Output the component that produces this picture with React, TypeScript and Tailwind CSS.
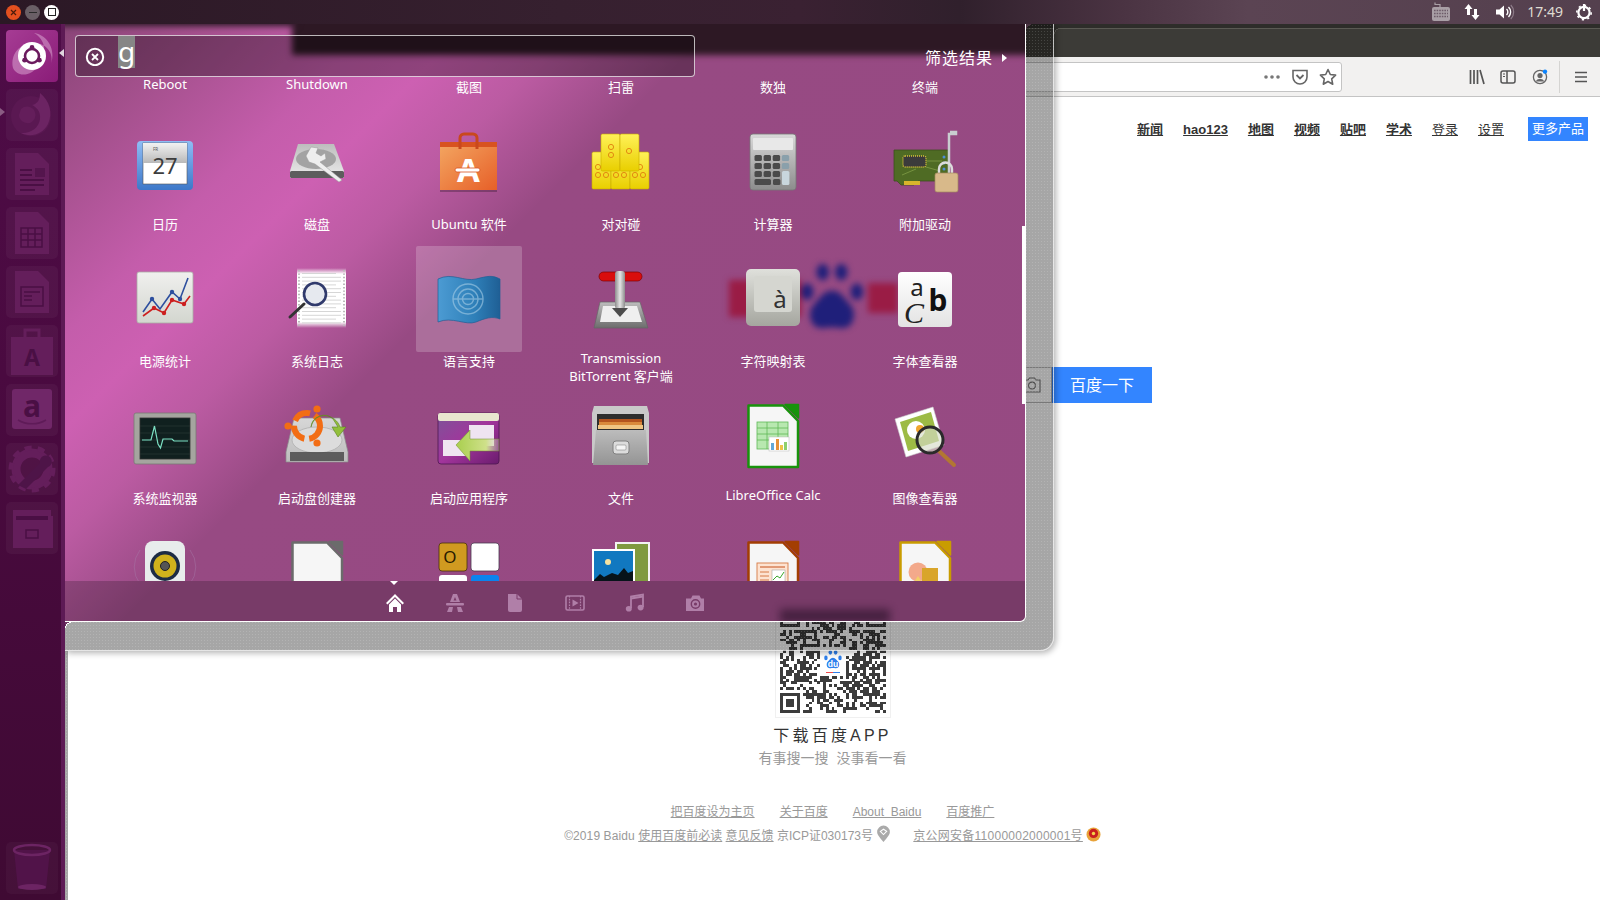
import type { ReactNode } from "react";

// 아이콘 좌표는 106x106 타일 기준입니다.
const Ic = ({ children }: { children: ReactNode }) => (
  <svg width="106" height="106" viewBox="0 0 106 106" className="block">
    {children}
  </svg>
);

const LO = ({ c, children }: { c: string; children?: ReactNode }) => (
  <Ic>
    <path d="M28.5 22.5H63L78 38V84H28.5Z" fill="#f6f6f6" stroke={c} strokeWidth="2.5" strokeLinejoin="round" />
    <path d="M65 21.5H78.5V35Z" fill={c} stroke={c} strokeWidth="1.5" strokeLinejoin="round" />
    {children}
  </Ic>
);

const CalendarIcon = () => (
  <Ic>
    <defs>
      <linearGradient id="calb" x1="0" y1="0" x2="0" y2="1"><stop offset="0" stopColor="#8fbdf5" /><stop offset="1" stopColor="#3d78c9" /></linearGradient>
      <linearGradient id="calt" x1="0" y1="0" x2="0" y2="1"><stop offset="0" stopColor="#f2f2f2" /><stop offset="1" stopColor="#b9b9b9" /></linearGradient>
    </defs>
    <rect x="25" y="32" width="56" height="49" rx="4" fill="url(#calb)" />
    <rect x="31" y="34" width="44" height="41" fill="#fff" stroke="#555" strokeWidth=".6" />
    <rect x="31" y="34" width="44" height="20" fill="url(#calt)" />
    <text x="41" y="42" fontSize="4.5" fill="#555" fontFamily="Noto Sans">FR</text>
    <text x="53" y="65" fontSize="22" fill="#3d3d3d" textAnchor="middle" fontFamily="Noto Sans">27</text>
  </Ic>
);

const DiskIcon = () => (
  <Ic>
    <defs>
      <linearGradient id="dsk" x1="0" y1="0" x2="0" y2="1"><stop offset="0" stopColor="#bdbdbd" /><stop offset="1" stopColor="#ececec" /></linearGradient>
    </defs>
    <path d="M34 35H70L80 62V69H26V62Z" fill="url(#dsk)" />
    <rect x="26" y="62" width="54" height="7" rx="1.5" fill="#5d5d5d" />
    <ellipse cx="52" cy="50" rx="20" ry="10" fill="#a3a3a3" />
    <path d="M47 38l7 1-2 5 5 3 4-3 1 6-6 3 22 18-3 2-24-18-6-2-3-6z" fill="#eee" stroke="#999" strokeWidth=".5" />
  </Ic>
);

const BagIcon = () => (
  <Ic>
    <defs>
      <linearGradient id="bag" x1="0" y1="0" x2="1" y2="1"><stop offset="0" stopColor="#f3a762" /><stop offset="1" stopColor="#e75f28" /></linearGradient>
    </defs>
    <rect x="24" y="33" width="57" height="48" fill="url(#bag)" />
    <path d="M24 33H81V38H24Z" fill="#d8531f" />
    <path d="M44 40V29a4 4 0 0 1 4-4h9a4 4 0 0 1 4 4V40" fill="none" stroke="#c9481d" strokeWidth="3" />
    <rect x="24" y="81" width="57" height="2" fill="#000" opacity=".25" />
    <text x="52.5" y="73" fontSize="33" fontWeight="700" fill="#fff" textAnchor="middle" fontFamily="Noto Sans">A</text>
    <rect x="39" y="59" width="25" height="4" rx="2" fill="#fff" stroke="#d8531f" strokeWidth=".8" />
  </Ic>
);

const Tile = ({ x, y, dots }: { x: number; y: number; dots: number[][] }) => (
  <g>
    <rect x={x} y={y} width="19" height="37" rx="1.5" fill="url(#mj)" stroke="#c9ad00" strokeWidth=".6" />
    {dots.map((d, i) => (
      <circle key={i} cx={x + d[0]} cy={y + d[1]} r="2.6" fill="none" stroke="#e38a12" strokeWidth="1" />
    ))}
  </g>
);

const MahjongIcon = () => (
  <Ic>
    <defs>
      <linearGradient id="mj" x1="0" y1="0" x2="0" y2="1"><stop offset="0" stopColor="#fff158" /><stop offset="1" stopColor="#e9cf00" /></linearGradient>
    </defs>
    <Tile x={24} y={43} dots={[[6, 15], [6, 23], [14, 23]]} />
    <Tile x={43} y={43} dots={[[5, 23], [13, 23]]} />
    <Tile x={62} y={43} dots={[[5, 23], [13, 23], [10, 15]]} />
    <Tile x={33} y={25} dots={[[10, 13], [10, 21]]} />
    <Tile x={52} y={25} dots={[[9, 17]]} />
  </Ic>
);

const CalcIcon = () => {
  const keys: ReactNode[] = [];
  for (let r = 0; r < 3; r++)
    for (let c = 0; c < 4; c++)
      if (!(c === 3 && r === 2))
        keys.push(<rect key={`${r}${c}`} x={34.5 + c * 9.1} y={46 + r * 8} width="7.4" height="6" rx="1.5" fill={c === 3 ? "#8aa0ab" : "#4a4a4a"} />);
  return (
    <Ic>
      <defs>
        <linearGradient id="clc" x1="0" y1="0" x2="0" y2="1"><stop offset="0" stopColor="#d9d9d9" /><stop offset="1" stopColor="#8c8c8c" /></linearGradient>
      </defs>
      <rect x="30" y="25" width="46" height="56" rx="3" fill="url(#clc)" stroke="#777" strokeWidth=".8" />
      <rect x="33" y="29" width="40" height="12" rx="1" fill="#e8e8e8" />
      {keys}
      <rect x="34.5" y="70" width="16.5" height="6" rx="1.5" fill="#4a4a4a" />
      <rect x="53" y="70" width="7.4" height="6" rx="1.5" fill="#4a4a4a" />
      <rect x="62" y="62" width="7.4" height="14" rx="1.5" fill="#c9d6dd" />
    </Ic>
  );
};

const DriverIcon = () => (
  <Ic>
    <path d="M22 41H77V72H46L42 76H29L25 72H22Z" fill="#4f6b24" stroke="#3e4f1e" strokeWidth=".8" />
    <rect x="31" y="47" width="23" height="11" rx="2" fill="#3b3b3b" stroke="#d7c13d" strokeWidth="1.4" strokeDasharray="1 1" />
    <path d="M55 52H70M54 58L68 62M30 66L44 60" stroke="#86a34a" strokeWidth=".7" />
    <circle cx="72" cy="48" r="1.5" fill="#4e8fd6" /><circle cx="72" cy="54" r="1.5" fill="#4e8fd6" /><circle cx="72" cy="60" r="1.5" fill="#4e8fd6" />
    <rect x="32" y="72" width="16" height="4" fill="#d8b52c" />
    <path d="M77 68V25H84V23H78" fill="none" stroke="#c9cdd0" strokeWidth="2.5" />
    <path d="M67 64v-4a6.5 6.5 0 0 1 13 0v4" fill="none" stroke="#dcdcdc" strokeWidth="2.4" />
    <rect x="63" y="64" width="23" height="19" rx="2" fill="#d8b98a" stroke="#a58a5e" strokeWidth=".7" />
  </Ic>
);

const ChartIcon = () => (
  <Ic>
    <defs>
      <linearGradient id="cht" x1="0" y1="0" x2="0" y2="1"><stop offset="0" stopColor="#f0f0ee" /><stop offset="1" stopColor="#d3d6cf" /></linearGradient>
    </defs>
    <rect x="25" y="26" width="56" height="51" rx="2" fill="url(#cht)" stroke="#a9aca5" strokeWidth=".8" />
    <path d="M31 66L40 53 48 63 60 46 68 53 76 32" fill="none" stroke="#2d4f9e" strokeWidth="1.6" />
    <path d="M31 70L42 62 52 67 60 54 72 58 78 50" fill="none" stroke="#cc1f1f" strokeWidth="1.6" />
    <circle cx="42" cy="62" r="2.2" fill="#cc1f1f" /><circle cx="52" cy="67" r="2.2" fill="#cc1f1f" /><circle cx="60" cy="54" r="2.2" fill="#cc1f1f" /><circle cx="72" cy="58" r="2.2" fill="#cc1f1f" />
    <circle cx="40" cy="53" r="2.2" fill="#2d4f9e" /><circle cx="60" cy="46" r="2.2" fill="#2d4f9e" /><circle cx="68" cy="53" r="2.2" fill="#2d4f9e" />
  </Ic>
);

const LogIcon = () => {
  const rows: ReactNode[] = [];
  for (let i = 0; i < 14; i++) rows.push(<rect key={i} x="38" y={27 + i * 3.8} width={i % 3 === 0 ? 34 : 39} height="1" fill="#d6d6d6" />);
  return (
    <Ic>
      <defs>
        <linearGradient id="logf" x1="0" y1="0" x2="0" y2="1"><stop offset="0" stopColor="#fff" stopOpacity="0" /><stop offset=".1" stopColor="#fff" /><stop offset=".9" stopColor="#fff" /><stop offset="1" stopColor="#fff" stopOpacity="0" /></linearGradient>
      </defs>
      <rect x="33" y="22" width="49" height="60" fill="url(#logf)" />
      {rows}
      <path d="M35 24V80M80 24V80" stroke="#bbb" strokeWidth="2" strokeDasharray="1.4 2" />
      <path d="M26 71L40 58" stroke="#333" strokeWidth="3" strokeLinecap="round" />
      <circle cx="51" cy="48" r="11" fill="#e6e9ef" stroke="#303a6c" strokeWidth="2.6" />
    </Ic>
  );
};

const LangIcon = () => (
  <Ic>
    <defs>
      <linearGradient id="lng" x1="0" y1="0" x2="1" y2="0"><stop offset="0" stopColor="#4c9bd3" /><stop offset=".6" stopColor="#2e7fb8" /><stop offset="1" stopColor="#1f5f95" /></linearGradient>
    </defs>
    <path d="M22 33C36 26 48 36 60 33S76 29 84 33V73C76 70 70 72 60 76S36 70 22 76Z" fill="url(#lng)" stroke="#1f5f95" strokeWidth=".7" />
    <g fill="none" stroke="#a6cde6" strokeWidth="1.4" opacity=".6">
      <circle cx="52" cy="53" r="15" /><circle cx="52" cy="53" r="10" /><circle cx="52" cy="53" r="5.5" /><path d="M37 53H67" />
    </g>
  </Ic>
);

const TransmissionIcon = () => (
  <Ic>
    <defs>
      <linearGradient id="trb" x1="0" y1="0" x2="0" y2="1"><stop offset="0" stopColor="#bdbdbd" /><stop offset="1" stopColor="#6d6d6d" /></linearGradient>
      <linearGradient id="trs" x1="0" y1="0" x2="1" y2="0"><stop offset="0" stopColor="#8d8d8d" /><stop offset=".5" stopColor="#e5e5e5" /><stop offset="1" stopColor="#8d8d8d" /></linearGradient>
    </defs>
    <path d="M32 56H72L80 82H26Z" fill="url(#trb)" stroke="#666" strokeWidth=".7" />
    <path d="M35 60H69L74 76H32Z" fill="#efefef" />
    <rect x="31" y="26" width="43" height="9" rx="4.5" fill="#d90d0d" stroke="#7d0505" strokeWidth=".7" />
    <rect x="47" y="25" width="10" height="38" rx="3" fill="url(#trs)" />
    <path d="M44 62H60L52 71Z" fill="#4c4c4c" />
  </Ic>
);

const CharIcon = () => (
  <Ic>
    <defs>
      <linearGradient id="chk" x1="0" y1="0" x2="0" y2="1"><stop offset="0" stopColor="#dfe0db" /><stop offset="1" stopColor="#a5a69f" /></linearGradient>
    </defs>
    <rect x="26" y="23" width="54" height="57" rx="5" fill="url(#chk)" />
    <rect x="34" y="30" width="38" height="36" rx="3" fill="#d5d6d0" />
    <text x="60" y="62" fontSize="24" fill="#333" textAnchor="middle" fontFamily="Noto Sans">à</text>
  </Ic>
);

const FontIcon = () => (
  <Ic>
    <defs>
      <linearGradient id="fnt" x1="0" y1="0" x2="0" y2="1"><stop offset="0" stopColor="#fff" /><stop offset="1" stopColor="#e3e3e3" /></linearGradient>
    </defs>
    <rect x="26" y="26" width="54" height="55" rx="4" fill="url(#fnt)" />
    <text x="45" y="50" fontSize="24" fill="#222" textAnchor="middle" fontFamily="Noto Sans">a</text>
    <text x="42" y="77" fontSize="30" fill="#222" textAnchor="middle" fontStyle="italic" fontFamily="Liberation Serif">C</text>
    <text x="66" y="65" fontSize="30" fontWeight="700" fill="#111" textAnchor="middle" fontFamily="Noto Sans">b</text>
  </Ic>
);

const MonitorIcon = () => (
  <Ic>
    <rect x="22" y="30" width="62" height="51" rx="2" fill="#a5a59f" stroke="#7a7a75" strokeWidth=".8" />
    <rect x="28" y="35" width="50" height="41" fill="#10201f" stroke="#333" strokeWidth=".8" />
    <path d="M28 43H78M28 50H78M28 57H78M28 64H78M28 71H78" stroke="#2b3c3a" strokeWidth=".6" />
    <path d="M30 57H39L42.5 43 46 61 48.5 65 51 56H60L62 58H76" fill="none" stroke="#7be0c3" strokeWidth="1.2" />
  </Ic>
);

const StartDiskIcon = () => (
  <Ic>
    <defs>
      <linearGradient id="sd" x1="0" y1="0" x2="0" y2="1"><stop offset="0" stopColor="#d7d7d7" /><stop offset="1" stopColor="#bdbdbd" /></linearGradient>
    </defs>
    <path d="M30 35H76L84 69V79H22V69Z" fill="url(#sd)" stroke="#8a8a8a" strokeWidth=".7" />
    <ellipse cx="53" cy="57" rx="25" ry="13" fill="#dcdcdc" stroke="#aaa" strokeWidth=".7" />
    <rect x="26" y="69" width="54" height="9" fill="#3b3b3b" opacity=".75" />
    <circle cx="43" cy="43" r="13" fill="none" stroke="#f26d14" strokeWidth="6" strokeDasharray="18 5" />
    <circle cx="53" cy="26" r="3.6" fill="#f26d14" /><circle cx="24" cy="43" r="3.6" fill="#f26d14" /><circle cx="53" cy="60" r="3.6" fill="#f26d14" />
    <path d="M47 44a13 13 0 0 1 22-8l5 8h-6l6 10 8-10h-6c-4-13-25-17-29 0z" fill="#92bf3c" stroke="#5d8120" strokeWidth=".6" />
  </Ic>
);

const StartAppIcon = () => (
  <Ic>
    <defs>
      <linearGradient id="sa" x1="0" y1="0" x2="1" y2="1"><stop offset="0" stopColor="#7c5498" /><stop offset=".5" stopColor="#a2359c" /><stop offset="1" stopColor="#6b1c6e" /></linearGradient>
      <linearGradient id="sag" x1="0" y1="0" x2="1" y2="0"><stop offset="0" stopColor="#a9cf4e" /><stop offset=".7" stopColor="#cfe08a" /><stop offset="1" stopColor="#d9d9c8" stopOpacity=".3" /></linearGradient>
    </defs>
    <rect x="22" y="30" width="61" height="51" rx="3" fill="url(#sa)" stroke="#4d1750" strokeWidth=".8" />
    <rect x="22" y="30" width="61" height="8" rx="2" fill="#e9e6cf" />
    <rect x="53" y="42" width="25" height="21" fill="#efe4f1" /><rect x="27" y="57" width="23" height="16" fill="#efe4f1" />
    <path d="M40 62L54 47V56H83V68H54V78Z" fill="url(#sag)" stroke="#6f8f2a" strokeWidth=".5" />
  </Ic>
);

const FilesIcon = () => (
  <Ic>
    <defs>
      <linearGradient id="fl" x1="0" y1="0" x2="0" y2="1"><stop offset="0" stopColor="#bcbcbc" /><stop offset="1" stopColor="#949494" /></linearGradient>
    </defs>
    <path d="M26 23H79L81 30V80H24V30Z" fill="#c9c9c9" />
    <rect x="29" y="31" width="47" height="16" fill="#2d2d2d" />
    <rect x="31" y="36" width="43" height="3" fill="#b3541e" /><rect x="31" y="39" width="43" height="3" fill="#d98a3c" /><rect x="30" y="42" width="45" height="4" fill="#efc583" />
    <path d="M28 47H78L80 82H25Z" fill="url(#fl)" />
    <rect x="45" y="58" width="16" height="13" rx="3" fill="#dcdcdc" stroke="#808080" strokeWidth="1" />
    <rect x="48" y="62" width="10" height="5" rx="1" fill="#f5f5f5" stroke="#777" strokeWidth=".5" />
  </Ic>
);

const SheetIcon = () => (
  <LO c="#18930c">
    <rect x="37" y="39" width="31" height="27" fill="#b8e8b0" stroke="#5fb857" strokeWidth=".8" />
    <path d="M37 45H68M37 51H68M37 57H68M47 39V66M58 39V66" stroke="#5fb857" strokeWidth=".8" />
    <rect x="49" y="54" width="20" height="14" fill="#fff" stroke="#bbb" strokeWidth=".5" />
    <rect x="51" y="60" width="3" height="7" fill="#62a8d8" /><rect x="56" y="56" width="3" height="11" fill="#e69138" /><rect x="60" y="62" width="3" height="5" fill="#f0c34a" /><rect x="64" y="59" width="3" height="8" fill="#8fd06d" />
  </LO>
);

const ViewerIcon = () => (
  <Ic>
    <path d="M23 36L61 24 72 62 34 74Z" fill="#fff" stroke="#ccc" strokeWidth=".6" />
    <path d="M28 39L59 29 67 58 36 68Z" fill="#9dbb45" />
    <circle cx="44" cy="47" r="9" fill="#fff" /><circle cx="48" cy="46" r="4" fill="#f0a52f" />
    <path d="M67 68L82 82" stroke="#b27732" strokeWidth="4" strokeLinecap="round" />
    <circle cx="58" cy="57" r="13" fill="#d5dcc8" fillOpacity=".65" stroke="#2a2a2a" strokeWidth="3" />
  </Ic>
);

const SpeakerIcon = () => (
  <Ic>
    <rect x="33" y="21" width="40" height="60" rx="8" fill="#e8ecec" />
    <circle cx="53" cy="46" r="15" fill="#1d2c44" />
    <circle cx="53" cy="46" r="11.5" fill="#d0b21c" />
    <circle cx="53" cy="46" r="4.5" fill="#555" stroke="#222" strokeWidth="1" />
    <path d="M28 30a28 28 0 0 0 0 34M78 30a28 28 0 0 1 0 34" fill="none" stroke="#a675a5" strokeWidth="1" opacity=".5" />
  </Ic>
);

const TilesIcon = () => (
  <Ic>
    <rect x="23" y="23" width="28" height="28" rx="3" fill="#d09a20" stroke="#4a3209" strokeWidth=".8" />
    <text x="34" y="43" fontSize="17" fill="#2a1c00" textAnchor="middle" fontFamily="Noto Sans">O</text>
    <rect x="55" y="23" width="28" height="28" rx="3" fill="#fff" stroke="#4a3a50" strokeWidth=".8" />
    <rect x="23" y="55" width="28" height="28" rx="3" fill="#fff" />
    <rect x="55" y="55" width="28" height="28" rx="3" fill="#0a84ee" />
  </Ic>
);

const PhotosIcon = () => (
  <Ic>
    <rect x="48" y="23" width="33" height="50" fill="#7f9a3f" stroke="#f3f3f3" strokeWidth="2" />
    <rect x="46" y="44" width="16" height="28" fill="#b52a2a" stroke="#fff" strokeWidth="1.5" />
    <rect x="25" y="30" width="41" height="42" fill="#1178c0" stroke="#fff" strokeWidth="2" />
    <circle cx="40" cy="42" r="3" fill="#f6e3a1" />
    <path d="M26 60L32 54 36 57 44 53 50 55 56 48 60 53 65 51V72H26Z" fill="#07131a" />
  </Ic>
);

const ImpressDoc = () => (
  <LO c="#a33e03">
    <rect x="37" y="43" width="31" height="24" fill="#fde3d1" stroke="#d67a46" strokeWidth=".9" />
    <path d="M40 47H65" stroke="#c5501a" strokeWidth="1" /><path d="M40 52H49M40 56H49M40 60H49" stroke="#d67a46" strokeWidth="1" />
    <rect x="52" y="50" width="13" height="13" fill="#fff" stroke="#999" strokeWidth=".5" />
    <path d="M53 60L57 56 60 58 64 52" stroke="#39a82c" strokeWidth="1" fill="none" />
  </LO>
);

const DrawDoc = () => (
  <LO c="#c99c00">
    <circle cx="46" cy="52" r="9.5" fill="#f3a98b" />
    <rect x="50" y="48" width="16" height="16" fill="#d9a52a" />
    <path d="M38 68L46 56 54 68Z" fill="#f2d066" />
  </LO>
);

const labelRows = [
  { label: "Reboot", cls: "mb-[3px]" },
  { label: "Shutdown", cls: "mb-[3px]" },
  { label: "截图" },
  { label: "扫雷" },
  { label: "数独" },
  { label: "终端" },
];

// cls가 없으면 기본 mt-[1px]을 씁니다.
const apps: { label: ReactNode; icon: ReactNode; cls?: string; on?: boolean }[] = [
  { label: "日历", icon: <CalendarIcon /> },
  { label: "磁盘", icon: <DiskIcon /> },
  { label: "Ubuntu 软件", icon: <BagIcon /> },
  { label: "对对碰", icon: <MahjongIcon /> },
  { label: "计算器", icon: <CalcIcon /> },
  { label: "附加驱动", icon: <DriverIcon /> },
  { label: "电源统计", icon: <ChartIcon /> },
  { label: "系统日志", icon: <LogIcon /> },
  { label: "语言支持", icon: <LangIcon />, on: true },
  { label: <>Transmission<br />BitTorrent 客户端</>, icon: <TransmissionIcon />, cls: "mt-[-3px] [&]:leading-[18px]" },
  { label: "字符映射表", icon: <CharIcon /> },
  { label: "字体查看器", icon: <FontIcon /> },
  { label: "系统监视器", icon: <MonitorIcon /> },
  { label: "启动盘创建器", icon: <StartDiskIcon /> },
  { label: "启动应用程序", icon: <StartAppIcon /> },
  { label: "文件", icon: <FilesIcon /> },
  { label: "LibreOffice Calc", icon: <SheetIcon />, cls: "mt-[-2px]" },
  { label: "图像查看器", icon: <ViewerIcon /> },
  { label: "", icon: <SpeakerIcon /> },
  { label: "", icon: <LO c="#6b6b6b" /> },
  { label: "", icon: <TilesIcon /> },
  { label: "", icon: <PhotosIcon /> },
  { label: "", icon: <ImpressDoc /> },
  { label: "", icon: <DrawDoc /> },
];

const dim = "#641e5b";
const lines = "#4a0f44";

const DockDoc = ({ children }: { children?: ReactNode }) => (
  <svg width="52" height="52" viewBox="0 0 52 52">
    <path d="M9 5H32L43 16V47H9Z" fill={dim} />
    {children}
  </svg>
);

const launcher: ReactNode[] = [
  <svg width="52" height="52" viewBox="0 0 52 52" key="ff">
    <circle cx="25" cy="27" r="20" fill="#5a1852" />
    <path d="M34 4c10 8 13 20 8 31-5 10-17 14-27 9 9 1 18-5 19-14 1-8-4-12-8-14 6-1 8-6 8-12z" fill="#6c2463" />
    <path d="M15 20c4-4 10-3 13 1 3 5 1 11-4 13-6 1-11-3-11-8z" fill={dim} />
  </svg>,
  <DockDoc key="w">
    <path d="M14 22H26M14 27H26M14 32H38M14 37H38M14 42H29" stroke={lines} strokeWidth="2" />
    <rect x="29" y="20" width="10" height="9" fill={lines} opacity=".6" />
  </DockDoc>,
  <DockDoc key="c">
    <path d="M15 21H36V40H15ZM15 27H36M15 33H36M22 21V40M29 21V40" fill="none" stroke={lines} strokeWidth="1.5" />
  </DockDoc>,
  <DockDoc key="i">
    <path d="M15 21H37V40H15ZM18 26H34M18 30H26M18 34H26" fill="none" stroke={lines} strokeWidth="1.5" />
  </DockDoc>,
  <svg width="52" height="52" viewBox="0 0 52 52" key="bag">
    <path d="M5 12H47V50H5Z" fill={dim} />
    <path d="M19 13V5H33V13" fill="none" stroke={dim} strokeWidth="3" />
    <text x="26" y="41" fontSize="23" fontWeight="700" fill={lines} textAnchor="middle" fontFamily="Noto Sans">A</text>
  </svg>,
  <svg width="52" height="52" viewBox="0 0 52 52" key="amz">
    <rect x="6" y="5" width="40" height="40" rx="3" fill="#702768" />
    <text x="26" y="33" fontSize="30" fontWeight="700" fill="#4a0f44" textAnchor="middle" fontFamily="Noto Sans">a</text>
    <path d="M12 36c8 5 20 5 28 0" fill="none" stroke="#5f1b58" strokeWidth="1.5" />
  </svg>,
  <svg width="52" height="52" viewBox="0 0 52 52" key="set">
    <circle cx="26" cy="26" r="16" fill="none" stroke={dim} strokeWidth="9" />
    <circle cx="26" cy="26" r="21" fill="none" stroke={dim} strokeWidth="5" strokeDasharray="7 6" />
    <path d="M12 42L34 20a6 6 0 1 1 8 4L20 46z" fill="#4e1448" />
  </svg>,
  <svg width="52" height="52" viewBox="0 0 52 52" key="fl">
    <path d="M7 8H45V14H47V46H7Z" fill={dim} />
    <path d="M10 14H42V18H10Z" fill={lines} />
    <rect x="20" y="28" width="12" height="8" fill="none" stroke={lines} strokeWidth="1.5" />
  </svg>,
];

const Paw = ({ c = "#1f1f7a", w = 62, h = 70 }: { c?: string; w?: number; h?: number }) => (
  <svg width={w} height={h} viewBox="0 0 60 66">
    <g fill={c}>
      <ellipse cx="21" cy="8" rx="6" ry="8" /><ellipse cx="39" cy="8" rx="6" ry="8" />
      <ellipse cx="6" cy="27" rx="6" ry="8" /><ellipse cx="54" cy="27" rx="6" ry="8" />
      <path d="M30 26c9 0 12 8 18 14s4 24-10 22c-5-1-11-1-16 0C8 64 6 46 12 40s9-14 18-14z" />
    </g>
  </svg>
);

const Qr = () => {
  const cells: ReactNode[] = [];
  const n = 37;
  let s = 90817;
  for (let y = 0; y < n; y++)
    for (let x = 0; x < n; x++) {
      s = (s * 1103515245 + 12345) & 0x7fffffff;
      const inFinder = (x < 8 && y < 8) || (x > n - 9 && y < 8) || (x < 8 && y > n - 9);
      const inLogo = x > 13 && x < 23 && y > 13 && y < 24;
      if (!inFinder && !inLogo && (s >> 16) % 100 < 52) cells.push(<rect key={`${x}-${y}`} x={x} y={y} width="1.02" height="1.02" />);
    }
  const finder = (x: number, y: number) => (
    <g key={`${x}${y}`}>
      <path d={`M${x} ${y}h7v7h-7zM${x + 1} ${y + 1}v5h5v-5z`} fillRule="evenodd" />
      <rect x={x + 2} y={y + 2} width="3" height="3" />
    </g>
  );
  return (
    <svg width="106" height="106" viewBox="0 0 37 37" fill="#3c3c3c" shapeRendering="crispEdges" className="block">
      {cells}
      {[finder(0, 0), finder(30, 0), finder(0, 30)]}
      <g shapeRendering="auto">
        <g transform="translate(15.4 15) scale(.103)"><Paw c="#2f80ed" w={60} h={66} /></g>
        <text x="18.5" y="20.8" fontSize="3" fontWeight="700" fill="#fff" textAnchor="middle" fontFamily="Liberation Sans">du</text>
      </g>
      <rect x="16" y="22.6" width="2.5" height=".6" fill="#f04b4b" />
      <rect x="18.5" y="22.6" width="2.5" height=".6" fill="#2f80ed" />
    </svg>
  );
};

const bgDots = "bg-black/35 bg-[radial-gradient(rgba(255,255,255,.14)_1px,transparent_1px)] bg-[length:3px_3px]";

export default function App() {
  return (
    <div className="relative w-[1600px] h-[900px] overflow-hidden bg-white font-['Noto_Sans','Noto_Sans_CJK_SC',sans-serif]">
      <div className="flex flex-col h-full">
        {/* 상단 패널 */}
        <div className="relative z-30 h-[24px] shrink-0 flex items-center bg-[linear-gradient(90deg,#2b1825_0%,#36202f_35%,#3a2132_50%,#30202c_60%,#4a3342_70%,#5b4453_78%,#54404e_100%)]">
          <div className="flex items-center gap-[4px] pl-[6px]">
            <div className="w-[15px] h-[15px] rounded-full bg-[#e4501f] flex items-center justify-center">
              <svg width="9" height="9" viewBox="0 0 9 9"><path d="M2 2L7 7M7 2L2 7" stroke="#4a1b0b" strokeWidth="1.2" /></svg>
            </div>
            <div className="w-[15px] h-[15px] rounded-full bg-[#6a5f66] flex items-center justify-center">
              <div className="w-[8px] h-[1px] bg-[#2b2b2b]" />
            </div>
            <div className="w-[15px] h-[15px] rounded-full bg-white flex items-center justify-center">
              <div className="w-[8px] h-[8px] border-[1.5px] border-[#222]" />
            </div>
          </div>
          <div className="ml-auto flex items-center text-[#dfdbd2] pr-[7px]">
            <svg width="20" height="22" viewBox="0 0 20 22" className="mr-[12px]">
              <path d="M9 6V3.5H4V1.5" fill="none" stroke="#a99fa6" strokeWidth="1.2" />
              <rect x="1" y="6" width="18" height="14" rx="2" fill="#a99fa6" />
              <path d="M3 9.5H17M3 12.5H17M3 15.5H17" stroke="#6d5b68" strokeWidth="1.4" strokeDasharray="1.6 1" />
            </svg>
            <svg width="18" height="18" viewBox="0 0 18 18" className="mr-[14px]">
              <path d="M5.5 1L1.5 6H4V12H7V6H9.5ZM12.5 17L8.5 12H11V6H14V12H16.5Z" fill="#fff" />
            </svg>
            <svg width="20" height="18" viewBox="0 0 20 18" className="mr-[12px]">
              <path d="M1 6.5H4.5L9 2.5V15.5L4.5 11.5H1Z" fill="#fff" />
              <path d="M11.5 6a4 4 0 0 1 0 6M13.5 4a7 7 0 0 1 0 10" fill="none" stroke="#fff" strokeWidth="1.4" />
              <path d="M15.8 2a10 10 0 0 1 0 14" fill="none" stroke="#8d7c88" strokeWidth="1.2" />
            </svg>
            <span className="text-[14px] leading-[20px] mr-[12px]">17:49</span>
            <svg width="18" height="18" viewBox="0 0 18 18">
              <circle cx="9" cy="9.5" r="5.6" fill="none" stroke="#fff" strokeWidth="2.2" />
              <circle cx="9" cy="9.5" r="7.2" fill="none" stroke="#fff" strokeWidth="1.6" strokeDasharray="2.2 3.4" />
              <path d="M9 1V8" stroke="#fff" strokeWidth="2.2" />
            </svg>
          </div>
        </div>

        <div className="flex flex-1 min-h-0">
          {/* 왼쪽 launcher */}
          <div className="relative z-30 w-[65px] shrink-0 flex flex-col items-start pl-[6px] pt-[6px] bg-[linear-gradient(180deg,#4e0c47_0%,#4a0a40_40%,#3f0a33_100%)] border-r-[4px] border-[#5d1a55]">
            <div className="w-[52px] h-[52px] mb-[7px]">
              <svg width="52" height="52" viewBox="0 0 52 52" className="block">
                <defs>
                  <linearGradient id="bfb" x1="0" y1="0" x2="1" y2="1"><stop offset="0" stopColor="#a63c94" /><stop offset="1" stopColor="#8a1c78" /></linearGradient>
                </defs>
                <rect width="52" height="52" rx="4" fill="url(#bfb)" />
                <path d="M7 38C4 24 14 12 30 13 41 14 48 24 45 34 50 20 42 5 28 3 44 12 40 33 26 42 17 47 10 44 7 38Z" fill="#d9a3cf" opacity=".55" />
                <circle cx="26" cy="26" r="14" fill="#fff" />
                <circle cx="26" cy="26" r="7" fill="none" stroke="#6b1a5e" strokeWidth="2.6" />
                <circle cx="26" cy="17.5" r="2.4" fill="#6b1a5e" /><circle cx="18.6" cy="30.2" r="2.4" fill="#6b1a5e" /><circle cx="33.4" cy="30.2" r="2.4" fill="#6b1a5e" />
              </svg>
            </div>
            {launcher.map((icon, i) => (
              <div key={i} className="w-[52px] h-[52px] mb-[7px] rounded-[5px] bg-white/[.04] flex items-center justify-center">{icon}</div>
            ))}
            <div className="mt-auto mb-[6px] w-[52px] h-[52px] rounded-[5px] bg-white/[.03] flex items-center justify-center">
              <svg width="42" height="50" viewBox="0 0 42 50">
                <path d="M3 7L7 46H35L39 7Z" fill="#511349" />
                <ellipse cx="21" cy="7" rx="18" ry="5" fill="none" stroke="#6c2463" strokeWidth="2.5" />
                <ellipse cx="21" cy="44" rx="14" ry="3" fill="#6c2463" />
              </svg>
            </div>
            <div className="absolute left-0 top-[84px] w-0 h-0 border-y-[4px] border-y-transparent border-l-[5px] border-l-[#8a5c83]" />
            <div className="absolute left-[59px] top-[25px] w-0 h-0 border-y-[4px] border-y-transparent border-r-[5px] border-r-[#e0d5de]" />
          </div>

          {/* 브라우저 창 */}
          <div className="flex-1 min-w-0 flex flex-col bg-[#2e2d2a] pt-[4px]">
            <div className="h-[29px] shrink-0 bg-[#3c3b37] border-t border-[#5a5953]" />
            <div className="h-[40px] shrink-0 bg-[#f2f1f0] border-b border-[#c4c4c4] flex items-center">
              <div className="ml-[20px] w-[1257px] h-[30px] bg-white border border-[#c4c4c4] rounded-[3px] flex items-center justify-end text-[#5f5f5f]">
                <svg width="16" height="4" viewBox="0 0 16 4" className="mr-[11px]"><circle cx="2" cy="2" r="1.8" fill="#777" /><circle cx="8" cy="2" r="1.8" fill="#777" /><circle cx="14" cy="2" r="1.8" fill="#777" /></svg>
                <svg width="18" height="18" viewBox="0 0 18 18" className="mr-[10px]"><path d="M2 2.5H16V9a7 7 0 0 1-14 0Z" fill="none" stroke="#666" strokeWidth="1.6" /><path d="M5.5 7L9 10.5 12.5 7" fill="none" stroke="#666" strokeWidth="1.8" /></svg>
                <svg width="18" height="18" viewBox="0 0 18 18" className="mr-[4px]"><path d="M9 1.5L11.3 6.5 16.6 7.1 12.7 10.8 13.7 16.2 9 13.5 4.3 16.2 5.3 10.8 1.4 7.1 6.7 6.5Z" fill="none" stroke="#666" strokeWidth="1.6" strokeLinejoin="round" /></svg>
              </div>
              <div className="flex items-center ml-auto pr-[12px] text-[#555]">
                <svg width="16" height="16" viewBox="0 0 16 16" className="mr-[15px]"><path d="M1.5 1V15M5 1V15M8.5 1V15M11 1L15 15" stroke="#555" strokeWidth="1.7" fill="none" /></svg>
                <svg width="16" height="16" viewBox="0 0 16 16" className="mr-[16px]"><rect x="1" y="2" width="14" height="12" rx="2" fill="none" stroke="#555" strokeWidth="1.5" /><path d="M7 2V14" stroke="#555" strokeWidth="1.5" /><path d="M3 5H5M3 7.5H5" stroke="#555" /></svg>
                <svg width="16" height="16" viewBox="0 0 16 16" className="mr-[11px]"><circle cx="8" cy="8" r="6.6" fill="none" stroke="#666" strokeWidth="1.3" /><circle cx="8" cy="6.5" r="2.6" fill="#666" /><path d="M3.5 12.5a5 5 0 0 1 9 0" fill="#666" /><circle cx="13" cy="2.6" r="2.2" fill="#0a84ff" /></svg>
                <div className="w-[1px] h-[32px] bg-[#d5d4d2] mr-[14px]" />
                <svg width="14" height="14" viewBox="0 0 14 14"><path d="M1 2.5H13M1 7H13M1 11.5H13" stroke="#555" strokeWidth="1.5" /></svg>
              </div>
            </div>

            {/* 바이두 페이지 */}
            <div className="flex-1 min-h-0 bg-white flex flex-col items-center font-['Liberation_Sans','Noto_Sans_CJK_SC',sans-serif]">
              <div className="self-stretch flex justify-end items-center pt-[20px] pr-[12px] text-[13px] text-[#333]">
                <div className="flex items-center gap-[20px] mr-[24px] mt-[2px]">
                  {["新闻", "hao123", "地图", "视频", "贴吧", "学术"].map((t) => (
                    <span key={t} className="font-bold underline">{t}</span>
                  ))}
                  <span className="underline">登录</span>
                  <span className="underline">设置</span>
                </div>
                <div className="w-[60px] h-[24px] bg-[#3385ff] text-white flex items-center justify-center">更多产品</div>
              </div>
              <div className="mt-[226px] flex h-[36px]">
                <div className="w-[539px] border border-[#b8b8b8] flex items-center justify-end pr-[10px]">
                  <svg width="18" height="16" viewBox="0 0 18 16"><path d="M1 3H5L6.5 1H11.5L13 3H17V15H1Z" fill="none" stroke="#777" strokeWidth="1.1" /><circle cx="9" cy="8.5" r="3.4" fill="none" stroke="#777" strokeWidth="1.1" /></svg>
                </div>
                <div className="w-[100px] bg-[#3385ff] text-white text-[16px] flex items-center justify-center pt-[1px]">百度一下</div>
              </div>
              <div className="mt-[199px] border border-[#f0f0f0] p-[4px]"><Qr /></div>
              <div className="mt-[6px] text-[16px] leading-[24px] tracking-[3.2px] text-[#333]">下载百度APP</div>
              <div className="text-[14px] leading-[20px] text-[#999] whitespace-pre">有事搜一搜  没事看一看</div>
              <div className="mt-[36px] flex gap-[25px] text-[12px] leading-[16px] text-[#999] underline whitespace-pre">
                <span>把百度设为主页</span><span>关于百度</span><span>About  Baidu</span><span>百度推广</span>
              </div>
              <div className="mt-[8px] flex items-center text-[12px] leading-[16px] text-[#999] whitespace-pre">
                <span className="tracking-[.1px]">©2019 Baidu </span><span className="underline">使用百度前必读</span><span> </span><span className="underline">意见反馈</span>
                <span> 京ICP证030173号 </span>
                <svg width="15" height="18" viewBox="0 0 14 17" className="mt-[-4px]"><path d="M7 16C3 11 1 9 1 6.5a6 6 0 0 1 12 0C13 9 11 11 7 16Z" fill="#aaa" /><path d="M4 6L7 4 10 6 7 9Z" fill="none" stroke="#fff" /></svg>
                <span className="underline ml-[22px] tracking-[.25px]">京公网安备11000002000001号</span>
                <svg width="15" height="17" viewBox="0 0 14 16" className="ml-[3px] mt-[-3px]"><circle cx="7" cy="8" r="6.6" fill="#e8a33a" /><circle cx="7" cy="7" r="4.4" fill="#c9201f" /><circle cx="7" cy="7" r="1.6" fill="#f4d34a" /></svg>
              </div>
            </div>
          </div>
        </div>
      </div>

      {/* 대시 반투명 프레임 */}
      <div className="absolute left-[1054px] top-[24px] w-[546px] h-[4px] z-10 bg-[#2e2d2a]" />
      <div className="absolute left-[1054px] top-[28px] w-[6px] h-[6px] z-10 bg-[radial-gradient(circle_at_100%_100%,transparent_5px,#5a5953_5px,#5a5953_6px,#2e2d2a_6px)]" />
      <div className={`absolute left-[65px] top-[651px] w-[3px] h-[249px] z-10 ${bgDots}`} />
      <div className={`absolute left-[65px] top-[24px] w-[989px] h-[627px] z-20 rounded-br-[14px] border-r border-b border-white/70 shadow-[2px_2px_6px_rgba(0,0,0,.3)] ${bgDots}`}>
        <div className="absolute left-[961px] top-0 w-[8px] h-[8px] bg-[radial-gradient(circle_at_100%_100%,transparent_8px,#4a3342_8px)]" />
        <div className="absolute left-0 top-[598px] w-[6px] h-[6px] bg-[radial-gradient(circle_at_100%_100%,transparent_5px,#fff_5px,#fff_6px,#6b3560_6px)]" />
        {/* 대시 본체 */}
        <div className="relative w-[961px] h-[598px] overflow-hidden rounded-br-[6px] border-r border-b border-white flex flex-col bg-[linear-gradient(135deg,#8a4578_0%,#a14f8a_8%,#c45dab_20%,#cd60b2_26%,#bb5ba2_33%,#974a83_42%,#964a82_100%)]">
          <div className="absolute left-[227px] top-[-12px] w-[760px] h-[43px] bg-[#2d1824] blur-[3px]" />
          <div className="absolute left-[-8px] top-[-10px] w-[240px] h-[12px] bg-[#2b1725] blur-[3px]" />
          <div className="absolute left-[664px] top-[239px] flex items-center blur-[3px]">
            <div className="w-[72px] h-[37px] bg-[#9a1c45]" />
            <Paw />
            <div className="ml-[5px] w-[30px] h-[30px] bg-[#9a1c45]" />
          </div>

          <div className="relative flex-1 min-h-0 overflow-hidden">
            <div className="grid grid-cols-[repeat(6,152px)] pl-[24px] text-white text-[13px] text-center">
              {labelRows.map((c) => (
                <div key={c.label} className="h-[85px] flex items-end justify-center pb-[14px]">
                  <span className={`leading-[16px] ${c.cls ?? ""}`}>{c.label}</span>
                </div>
              ))}
              {apps.map((a, i) => (
                <div key={i} className="h-[137px] flex flex-col items-center">
                  <div className={`w-[106px] h-[106px] shrink-0 rounded-[2px] ${a.on ? "bg-white/20" : ""}`}>{a.icon}</div>
                  <div className={`leading-[16px] ${a.cls ?? "mt-[1px]"}`}>{a.label}</div>
                </div>
              ))}
            </div>
          </div>

          <div className="relative h-[40px] shrink-0 bg-black/20 flex items-center justify-center gap-[40px] pt-[3px]">
            <div className="absolute left-[325px] top-0 w-0 h-0 border-x-[4px] border-x-transparent border-t-[4px] border-t-white" />
            <div className="absolute left-[715px] top-[28px] w-[110px] h-[14px] bg-[#3a1a36] opacity-80 blur-[4px]" />
            <svg width="20" height="20" viewBox="0 0 20 20"><path d="M10 1L19 10 17.5 11.5 10 4 2.5 11.5 1 10ZM4 11.5L10 5.5 16 11.5V19H12V14H8V19H4Z" fill="#fff" /></svg>
            <svg width="20" height="20" viewBox="0 0 20 20" fill="#b07fa8"><path d="M8 1h4l3 8H5zM10 4L8.5 7.5h3z" fillRule="evenodd" /><rect x="1" y="10" width="18" height="2.5" rx="1" /><path d="M4 14h4l-1 5H2zM12 14h4l2 5h-5z" /></svg>
            <svg width="20" height="20" viewBox="0 0 20 20"><path d="M3 1H12L17 6V17a2 2 0 0 1-2 2H5a2 2 0 0 1-2-2Z" fill="#b07fa8" /><path d="M12 1V6H17" fill="none" stroke="#783b68" strokeWidth="1" /></svg>
            <svg width="20" height="20" viewBox="0 0 20 20"><rect x="1" y="3" width="18" height="14" rx="1.5" fill="none" stroke="#b07fa8" strokeWidth="1.6" /><path d="M4.5 3V17M15.5 3V17" stroke="#b07fa8" strokeWidth="1.2" strokeDasharray="1.6 1.2" /><path d="M7.5 6.5L13.5 10 7.5 13.5Z" fill="#b07fa8" /></svg>
            <svg width="20" height="20" viewBox="0 0 20 20"><path d="M6 15V3.5L18 1.5V14" fill="none" stroke="#b07fa8" strokeWidth="1.8" /><path d="M6 5.5L18 3.5" stroke="#b07fa8" strokeWidth="2" /><ellipse cx="3.8" cy="15.8" rx="3" ry="2.8" fill="#b07fa8" /><ellipse cx="15.6" cy="14.6" rx="3" ry="2.8" fill="#b07fa8" /></svg>
            <svg width="20" height="20" viewBox="0 0 20 20"><path d="M1 5.5H6L7.5 2.5H14.5L16 5.5H19V18H1Z" fill="#b07fa8" /><circle cx="10.5" cy="11" r="4.2" fill="none" stroke="#783b68" strokeWidth="1.4" /><circle cx="10.5" cy="11" r="1.6" fill="#783b68" /></svg>
          </div>

          {/* 스크롤바 */}
          <div className="absolute right-0 top-[202px] w-[3px] h-[178px] bg-white" />
          {/* 검색창 */}
          <div className="absolute left-[10px] top-[11px] w-[620px] h-[42px] rounded-[4px] border border-white/70 bg-black/30 flex items-center pl-[9px]">
            <svg width="20" height="20" viewBox="0 0 20 20"><circle cx="10" cy="11" r="8.2" fill="none" stroke="#fff" strokeWidth="2" /><path d="M7 8L13 14M13 8L7 14" stroke="#fff" strokeWidth="1.8" /></svg>
            <div className="ml-[13px] self-start h-[32px] w-[17px] bg-[#868686] text-white text-[28px] leading-[30px] text-center">g</div>
          </div>
          {/* 필터 */}
          <div className="absolute right-[18px] top-[24px] flex items-center text-white text-[16px] leading-[20px]">
            <span className="tracking-[1px]">筛选结果</span>
            <span className="ml-[9px] w-0 h-0 border-y-[4px] border-y-transparent border-l-[5px] border-l-white" />
          </div>
        </div>
      </div>
    </div>
  );
}
